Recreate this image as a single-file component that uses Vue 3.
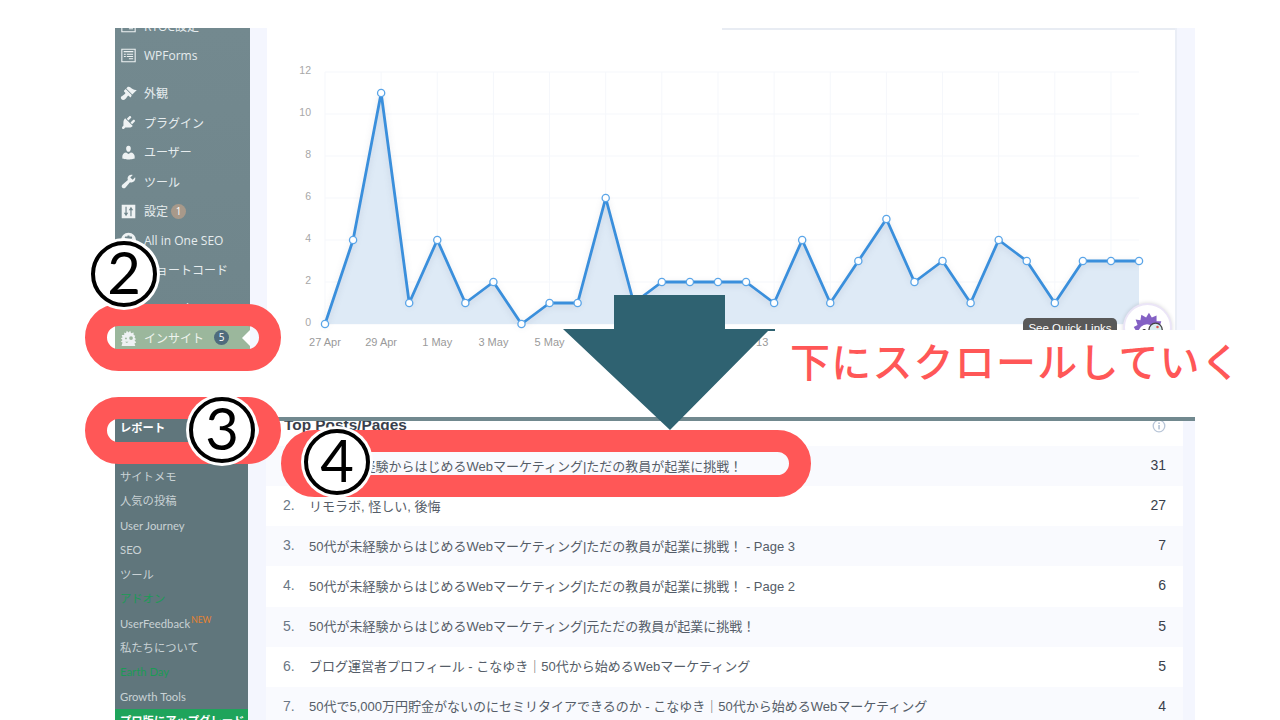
<template>
  <div class="slide">
    <!-- upper screenshot -->
    <section class="shot shot-top">
      <aside class="side side-top">
        <ul class="menu">
          <li v-for="item in topMenu" :key="item.label" class="menu-item" :class="{ gap: item.gap, current: item.current }">
            <svg class="menu-icon" viewBox="0 0 20 20" aria-hidden="true"><path :d="item.icon" /></svg>
            <span>{{ item.label }}</span>
            <b v-if="item.badge" class="badge" :class="{ blue: item.current }">{{ item.badge }}</b>
          </li>
        </ul>
      </aside>
      <div class="page">
        <div class="chart-card">
          <div class="card-line"></div>
          <svg class="chart" width="908" height="320" viewBox="0 0 908 320">
            <g class="grid">
              <line v-for="v in [0, 2, 4, 6, 8, 10, 12]" :key="'h' + v" :x1="xOf(0)" :x2="xOf(29)" :y1="yOf(v)" :y2="yOf(v)" />
              <line v-for="i in gridCols" :key="'v' + i" :x1="xOf(i)" :x2="xOf(i)" :y1="yOf(12)" :y2="yOf(0)" />
            </g>
            <polygon class="area" :points="areaPoints" />
            <polyline class="line" :points="linePoints" />
            <circle v-for="(v, i) in visits" :key="i" class="dot" :cx="xOf(i)" :cy="yOf(v)" r="3.6" />
            <text v-for="v in [0, 2, 4, 6, 8, 10, 12]" :key="'y' + v" class="tick" text-anchor="end" x="44" :y="yOf(v) - 0.5">{{ v }}</text>
            <text v-for="(d, i) in dates" :key="d" class="tick date" text-anchor="middle" :x="xOf(i * 2)" y="313">{{ d }}</text>
          </svg>
          <div class="quick-tip">See Quick Links</div>
          <div class="quick-btn">
            <svg viewBox="0 0 40 40" width="38" height="38" aria-hidden="true">
              <path fill="#8461c4" d="M8 25 5 20l4-2-2-6 5 1 1-6 5 3 3-5 3 5 5-2 0 6 5 0-2 6 3 3-3 3H8z" />
              <circle cx="19" cy="26" r="9" fill="#fff" />
              <circle cx="28" cy="23" r="7" fill="#d8eef0" stroke="#444" stroke-width="1.4" />
              <circle cx="30" cy="20" r="1.3" fill="#e0554f" />
              <circle cx="16" cy="24" r="2" fill="#222" />
            </svg>
          </div>
        </div>
      </div>
    </section>

    <!-- lower screenshot -->
    <section class="shot shot-bottom">
      <aside class="side side-bottom">
        <ul class="submenu">
          <li v-for="item in subMenu" :key="item.label" class="sub-item" :class="item.kind">
            {{ item.label }}<sup v-if="item.isNew">NEW</sup>
          </li>
        </ul>
      </aside>
      <div class="page page-low">
        <div class="table-card">
          <div class="table-head">
            <span>Top Posts/Pages</span>
            <svg width="14" height="14" viewBox="0 0 14 14" aria-hidden="true">
              <circle cx="7" cy="7" r="5.8" fill="none" stroke="#b9c6d8" stroke-width="1.3" />
              <rect x="6.2" y="6" width="1.7" height="4.4" fill="#b9c6d8" />
              <rect x="6.2" y="3.4" width="1.7" height="1.6" fill="#b9c6d8" />
            </svg>
          </div>
          <div v-for="(row, i) in posts" :key="i" class="post-row">
            <span class="post-no">{{ i + 1 }}.</span>
            <span class="post-title">{{ row.title }}</span>
            <span class="post-count">{{ row.count }}</span>
          </div>
        </div>
      </div>
    </section>

    <!-- annotations drawn over the screenshots -->
    <div class="note-band"></div>
    <div class="note-rule"></div>
    <p class="note-text">下にスクロールしていく</p>
    <svg class="note-arrow" width="214" height="135" viewBox="0 0 214 135" aria-hidden="true">
      <path d="M51 0h111v34h50v2h-7L107 135 0 34h51z" fill="#2f6271" />
    </svg>
    <div class="pill pill-2"></div>
    <div class="pill pill-3"></div>
    <div class="pill pill-4"></div>
    <div class="step step-2">2</div>
    <div class="step step-3">3</div>
    <div class="step step-4">4</div>
  </div>
</template>

<script setup>
const icons = {
  forms: 'M1.5 2h17v16h-17zM2.8 3.3v13.4h14.4V3.3zM4.3 4.6h11.4v1.6H4.3zM4.6 8h2.2v1.2H4.6zM8 8h7.4v1.2H8zM4.6 10.6h2.2v1.2H4.6zM8 10.6h7.4v1.2H8zM10.5 13.2h4.9v1.2h-4.9z',
  brush: 'M14.48 11.06L7.41 3.99l1.5-1.5c.5-.56 2.3-.47 3.51.32 1.21.8 1.43 1.28 2.91 2.1 1.18.64 2.45 1.26 4.45.85zm-.71.71L6.7 4.7 4.93 6.47c-.39.39-.39 1.02 0 1.41l1.06 1.06c.39.39.39 1.03 0 1.42-.6.6-1.43 1.11-2.21 1.69-.35.26-.7.53-1.01.84C1.43 13.23 1 14.13 1 15c0 .71.29 1.39.79 1.89.5.5 1.18.79 1.89.79 1.09 0 1.98-.42 2.88-1.41.31-.31.58-.66.84-1.01.58-.78 1.09-1.61 1.69-2.21.39-.39 1.03-.39 1.42 0l1.06 1.06c.39.39 1.02.39 1.41 0z',
  plug: 'M13.11 4.36L9.87 7.6 8 5.73l3.24-3.24c.35-.34 1.05-.2 1.56.32.52.51.66 1.21.31 1.55zm-8 1.77l.91-1.12 9.01 9.01-1.19.84c-.71.71-2.63 1.16-3.82 1.16H6.14L4.9 17.26c-.59.59-1.54.59-2.12 0-.59-.58-.59-1.53 0-2.12l1.24-1.24v-3.88c0-1.13.4-3.19 1.09-3.89zm7.26 3.97l3.24-3.24c.34-.35 1.04-.21 1.55.31.52.51.66 1.21.31 1.55l-3.24 3.25z',
  user: 'M10 9.25c-2.27 0-2.73-3.44-2.73-3.44C7 4.02 7.82 2 9.97 2c2.16 0 2.98 2.02 2.71 3.81 0 0-.41 3.44-2.68 3.44zm0 2.57L12.72 10c2.39 0 4.52 2.33 4.52 4.53v2.49s-3.65 1.13-7.24 1.13c-3.65 0-7.24-1.13-7.24-1.13v-2.49c0-2.25 1.94-4.48 4.47-4.48z',
  wrench: 'M16.68 9.77c-1.34 1.34-3.3 1.67-4.95.99l-5.41 6.52c-.99.99-2.59.99-3.58 0s-.99-2.59 0-3.57l6.52-5.42c-.68-1.65-.35-3.61.99-4.95 1.28-1.28 3.12-1.62 4.72-1.06l-2.89 2.89 2.82 2.82 2.86-2.87c.53 1.58.18 3.39-1.08 4.65z',
  sliders: 'M2 2h16v16H2zM6.4 4.5h1.4v7h1.9l-2.6 4-2.6-4h1.9zM12.2 15.5h1.4v-7h1.9l-2.6-4-2.6 4h1.9z',
  gear: 'M10 1a9 9 0 1 0 0 18 9 9 0 0 0 0-18zm1 3 .5 1.7 1.6-.8 1.3 1.3-.8 1.6 1.7.6v1.8l-1.7.5.8 1.6-1.3 1.3-1.6-.8-.5 1.7H9l-.6-1.7-1.6.8-1.3-1.3.8-1.6-1.7-.5V8.4l1.7-.6-.8-1.6 1.3-1.3 1.6.8L9 4z',
  code: 'M3 4h5v2H5v8h3v2H3zm9 0h5v12h-5v-2h3V6h-3z',
  monster: 'M2 19l1-3-2-1 2-2-2-2 2-1-1-3 3 0 0-3 2 1 1-3 2 2 2-2 1 3 3-1 0 3 2 1-1 2 2 2-2 1 2 3-2 1 1 3H2zM13 8.5a2.2 2.2 0 1 0 0 4.4 2.2 2.2 0 0 0 0-4.4zM7 10a1.1 1.1 0 1 0 0 2.2 1.1 1.1 0 0 0 0-2.2zM6 15l2 1.4 2-1.4z',
  mail: 'M2 5h16v11H2zm2 2 6 4 6-4H4z'
}

const topMenu = [
  { label: 'RTOC設定', icon: icons.forms },
  { label: 'WPForms', icon: icons.forms },
  { label: '外観', icon: icons.brush, gap: true },
  { label: 'プラグイン', icon: icons.plug },
  { label: 'ユーザー', icon: icons.user },
  { label: 'ツール', icon: icons.wrench },
  { label: '設定', icon: icons.sliders, badge: 1 },
  { label: 'All in One SEO', icon: icons.gear },
  { label: 'ショートコード', icon: icons.code },
  { label: 'WP Mail SMTP', icon: icons.mail, gap: true },
  { label: 'インサイト', icon: icons.monster, badge: 5, current: true }
]

const subMenu = [
  { label: 'レポート', kind: 'active' },
  { label: '設定' },
  { label: 'サイトメモ' },
  { label: '人気の投稿' },
  { label: 'User Journey' },
  { label: 'SEO' },
  { label: 'ツール' },
  { label: 'アドオン', kind: 'green' },
  { label: 'UserFeedback', isNew: true },
  { label: '私たちについて' },
  { label: 'Earth Day', kind: 'green' },
  { label: 'Growth Tools' },
  { label: 'プロ版にアップグレード', kind: 'upgrade' }
]

const site = '50代が未経験からはじめるWebマーケティング'
const brand = 'こなゆき｜50代から始めるWebマーケティング'
const posts = [
  { title: `${site}|ただの教員が起業に挑戦！`, count: 31 },
  { title: 'リモラボ, 怪しい, 後悔', count: 27 },
  { title: `${site}|ただの教員が起業に挑戦！ - Page 3`, count: 7 },
  { title: `${site}|ただの教員が起業に挑戦！ - Page 2`, count: 6 },
  { title: `${site}|元ただの教員が起業に挑戦！`, count: 5 },
  { title: `ブログ運営者プロフィール - ${brand}`, count: 5 },
  { title: `50代で5,000万円貯金がないのにセミリタイアできるのか - ${brand}`, count: 4 }
]

const visits = [0, 4, 11, 1, 4, 1, 2, 0, 1, 1, 6, 1, 2, 2, 2, 2, 1, 4, 1, 3, 5, 2, 3, 1, 4, 3, 1, 3, 3, 3]
const dates = ['27 Apr', '29 Apr', '1 May', '3 May', '5 May', '7 May', '9 May', '11 May', '13 May']
const gridCols = Array.from({ length: 15 }, (_, i) => i * 2)

const xOf = (i) => 58 + i * 28.07
const yOf = (v) => 294 - v * 21

const linePoints = visits.map((v, i) => `${xOf(i)},${yOf(v)}`).join(' ')
const areaPoints = `${xOf(0)},${yOf(0)} ${linePoints} ${xOf(29)},${yOf(0)}`
</script>

<style>
html,
body {
  background: #fff;
  margin: 0;
}
</style>

<style scoped>
.slide {
  background: #fff;
  height: 720px;
  overflow: hidden;
  padding-top: 28px;
  position: relative;
  width: 1280px;
  box-sizing: border-box;
  font-family: "Open Sans", "Noto Sans CJK JP", sans-serif;
}

.shot {
  display: flex;
  margin-left: 115px;
  overflow: hidden;
  width: 1080px;
}

.shot-top {
  height: 322px;
}

.shot-bottom {
  height: 302px;
  margin-top: 68px;
}

.side {
  color: #e6ecee;
  flex: none;
  font-size: 12px;
  overflow: hidden;
}

.side-top {
  background: linear-gradient(#73898f, #6f858b);
  width: 135px;
}

.side-bottom {
  background: #60767c;
  font-family: Lato, "Noto Sans CJK JP", sans-serif;
  font-size: 11.3px;
  width: 133px;
}

.menu,
.submenu {
  list-style: none;
  margin: 0;
  padding: 0;
}

.menu {
  margin-top: -17px;
}

.menu-item {
  align-items: center;
  display: flex;
  height: 29.4px;
  padding-left: 5px;
  position: relative;
}

.menu-item.gap {
  margin-top: 9px;
}

.menu-icon {
  fill: #eef2f3;
  flex: none;
  fill-rule: evenodd;
  height: 17px;
  margin-right: 7px;
  width: 17px;
}

.menu-item.current {
  background: #9bb79c;
  color: #eef3ee;
}

.menu-item.current::after {
  border-bottom: 8px solid transparent;
  border-right: 8px solid #fff;
  border-top: 8px solid transparent;
  content: "";
  position: absolute;
  right: 0;
  top: 7px;
}

.badge {
  background: #a8998a;
  border-radius: 50%;
  color: #fff;
  font-size: 10px;
  font-weight: 400;
  height: 15px;
  line-height: 15px;
  margin-left: 3px;
  text-align: center;
  width: 15px;
}

.badge.blue {
  background: #4f6b7d;
  margin-left: 10px;
}

.submenu {
  margin-top: -2px;
}

.sub-item {
  color: #c9d2d5;
  height: 24.45px;
  line-height: 24.45px;
  padding-left: 5px;
  white-space: nowrap;
}

.sub-item.active {
  color: #fff;
  font-weight: 700;
}

.sub-item.green {
  color: #1c9a56;
}

.sub-item.upgrade {
  background: #1fa45b;
  color: #fff;
  font-weight: 700;
}

.sub-item sup {
  color: #e8822e;
  font-size: 8.5px;
  line-height: 0;
  margin-left: 1px;
}

.page {
  background: #f4f6fe;
  flex: 1;
  padding: 0 18px 0 17px;
}

.page-low {
  padding: 0 12px 0 18px;
}

.chart-card {
  background: #fff;
  border-right: 2px solid #eaeef6;
  height: 100%;
  position: relative;
}

.card-line {
  background: #e8ecf3;
  height: 2px;
  margin-left: auto;
  width: 453px;
}

.chart {
  display: block;
}

.grid line {
  stroke: #f5f7fb;
  stroke-width: 1;
}

.area {
  fill: #deeaf6;
}

.line {
  fill: none;
  filter: drop-shadow(0 2px 3px rgba(40, 60, 90, 0.14));
  stroke: #3a8fdc;
  stroke-linejoin: round;
  stroke-width: 2.8;
}

.dot {
  fill: #fff;
  stroke: #5aa5e8;
  stroke-width: 1.3;
}

.tick {
  dominant-baseline: middle;
  fill: #a7a7a7;
  font-family: "Liberation Sans", sans-serif;
  font-size: 10.5px;
}

.date {
  fill: #9a9a9a;
  font-size: 11px;
}

.quick-tip {
  background: #595959;
  border-radius: 5px;
  color: #fff;
  font-family: "Liberation Sans", sans-serif;
  font-size: 11.5px;
  height: 24px;
  left: 756px;
  line-height: 20px;
  position: absolute;
  text-align: center;
  top: 290px;
  width: 94px;
}

.quick-btn {
  align-items: flex-start;
  background: #fff;
  border: 2px solid #ebe5f7;
  border-radius: 50%;
  box-shadow: 0 0 4px rgba(0, 0, 0, 0.15);
  box-sizing: border-box;
  display: flex;
  height: 49px;
  justify-content: center;
  left: 856px;
  padding-top: 3px;
  position: absolute;
  top: 275px;
  width: 49px;
}

.table-card {
  background: #fff;
  height: 100%;
}

.table-head {
  align-items: flex-start;
  color: #393f4c;
  display: flex;
  font-family: "Liberation Sans", sans-serif;
  font-size: 15.4px;
  font-weight: 700;
  height: 28px;
  justify-content: space-between;
  line-height: 13px;
  padding: 0 17px 0 18px;
  box-sizing: border-box;
}

.table-head svg {
  margin-top: 1px;
}

.post-row {
  align-items: center;
  box-sizing: border-box;
  color: #555d68;
  display: flex;
  font-family: "Liberation Sans", "Noto Sans CJK JP", sans-serif;
  font-size: 13px;
  height: 40.15px;
  padding: 0 17px 2px;
}

.post-row:nth-child(even) {
  background: #f9fafe;
}

.post-no {
  color: #6b7785;
  flex: none;
  font-size: 14px;
  width: 26px;
}

.post-title {
  flex: 1;
}

.post-count {
  color: #393f4c;
  font-size: 14px;
}

.note-band {
  background: #fff;
  height: 88px;
  left: 770px;
  position: absolute;
  top: 330px;
  width: 425px;
}

.note-rule {
  background: #71898f;
  height: 4px;
  left: 266px;
  position: absolute;
  top: 417px;
  width: 929px;
}

.note-text {
  color: #ff5757;
  font-family: "Noto Sans CJK JP", sans-serif;
  font-size: 40px;
  font-weight: 500;
  left: 790px;
  letter-spacing: 1.2px;
  line-height: 40px;
  margin: 0;
  position: absolute;
  top: 340px;
  white-space: nowrap;
}

.note-arrow {
  left: 563px;
  position: absolute;
  top: 295px;
}

.pill {
  border: 22px solid #ff5757;
  border-radius: 34px;
  box-sizing: border-box;
  height: 67px;
  position: absolute;
}

.pill-2 {
  left: 85px;
  top: 304px;
  width: 196px;
}

.pill-3 {
  left: 85px;
  top: 397px;
  width: 196px;
}

.pill-4 {
  left: 281px;
  top: 430px;
  width: 530px;
}

.step {
  background: #fff;
  border: 4px solid #000;
  border-radius: 50%;
  box-shadow: 0 0 0 3px #fff;
  box-sizing: border-box;
  color: #000;
  font-family: Lato, sans-serif;
  font-size: 58px;
  height: 66px;
  line-height: 54px;
  position: absolute;
  text-align: center;
  width: 66px;
}

.step-2 {
  left: 91px;
  top: 241px;
}

.step-3 {
  left: 189px;
  top: 397px;
}

.step-4 {
  left: 304px;
  top: 429px;
}
</style>
